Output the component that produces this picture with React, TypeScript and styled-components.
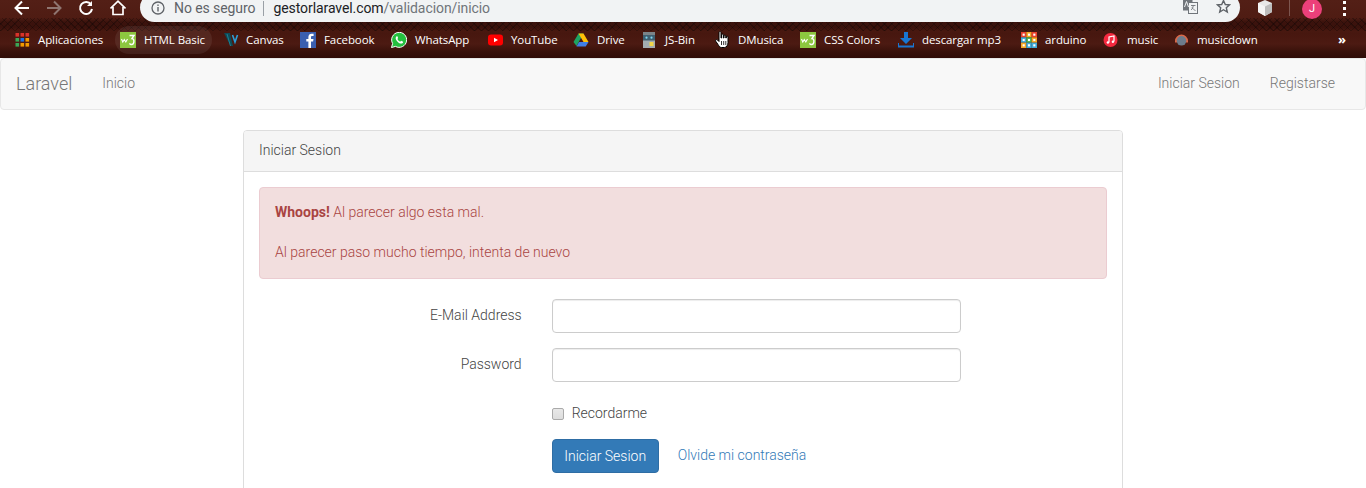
import React from "react";
import styled, { createGlobalStyle } from "styled-components";

const Global = createGlobalStyle`
  html, body { margin: 0; padding: 0; height: 488px; overflow: hidden; background: #fff; }
  body { font-family: Roboto, "Liberation Sans", sans-serif; font-size: 14px; font-weight: 300; line-height: 20px; color: #555; }
  * { box-sizing: border-box; }
`;

const Chrome = styled.div`
  height: 58px;
  position: relative;
  background-color: #3f120c;
  background-image:
    repeating-linear-gradient(45deg, rgba(0,0,0,.26) 0 1px, transparent 1px 5px),
    repeating-linear-gradient(-45deg, rgba(0,0,0,.26) 0 1px, transparent 1px 5px),
    linear-gradient(180deg, transparent 0, rgba(20,0,0,.3) 30%, rgba(20,0,0,.3) 70%, transparent 100%),
    linear-gradient(180deg, #531f16 0, #4f1c13 18px, #47170f 34px, #4c1a12 44px, #3a120b 51px, #2f0c07 58px);
  background-size: 100% 13px, 100% 13px, 100% 13px, 100% 100%;
  background-position: 0 18px, 0 18px, 0 18px, 0 0;
  background-repeat: no-repeat;
`;

const TopBar = styled.div`
  height: 22px;
  display: flex;
  align-items: flex-end;
  overflow: hidden;
  padding-left: 15px;
`;

const NavIcon = styled.svg<{ $mr: number; $ml?: number; $sw?: number }>`
  width: 16px;
  height: 16px;
  flex: none;
  margin-left: ${(p) => p.$ml ?? 0}px;
  margin-right: ${(p) => p.$mr}px;
  align-self: flex-start;
  fill: none;
  stroke: ${(p) => p.color || "#fff"};
  stroke-width: ${(p) => p.$sw ?? 2};
`;

const Omnibox = styled.div`
  width: 1100px;
  height: 29px;
  flex: none;
  background: #f1f3f4;
  border-radius: 15px;
  display: flex;
  align-items: flex-start;
  padding: 7px 9px 0 11px;
  font-family: Roboto, sans-serif;
  font-weight: 400;
  font-size: 14px;
  line-height: 17px;
  letter-spacing: -0.08px;
`;

const InfoIcon = styled.svg`
  width: 14px;
  height: 14px;
  margin: 1px 9px 0 0;
  flex: none;
`;

const Insecure = styled.span`
  color: #5f6368;
`;

const Separator = styled.span`
  width: 1px;
  height: 15px;
  background: #9aa0a6;
  margin: 1px 9px 0 8px;
`;

const Domain = styled.span`
  color: #202124;
`;

const UrlPath = styled.span`
  color: #70757a;
`;

const OmniActions = styled.div`
  margin-left: auto;
  display: flex;
  gap: 18px;
  margin-top: -1px;
`;

const OmniIcon = styled.svg`
  width: 15px;
  height: 15px;
  flex: none;
`;

const CubeIcon = styled.svg`
  width: 16px;
  height: 16px;
  flex: none;
`;

const ToolIcons = styled.div`
  display: flex;
  align-items: center;
  align-self: flex-start;
  height: 16px;
  margin-left: 17px;
  flex: none;
`;

const ToolDivider = styled.span`
  width: 1px;
  height: 16px;
  background: rgba(255, 255, 255, 0.25);
  margin: 0 12px 0 16px;
`;

const Avatar = styled.span`
  width: 20px;
  height: 20px;
  border-radius: 50%;
  background: #ec407a;
  color: #fff;
  font: 400 11px/20px Roboto, sans-serif;
  text-align: center;
  margin-top: 1px;
`;

const MenuDots = styled.span`
  display: flex;
  flex-direction: column;
  gap: 3px;
  margin-left: 21px;
  & > i {
    width: 3px;
    height: 3px;
    background: #fff;
    display: block;
  }
`;

const BookmarkBar = styled.div`
  height: 36px;
  display: flex;
  align-items: center;
  padding-left: 15px;
  position: relative;
`;

const Bookmark = styled.div<{ $w: number; $gap?: number; $active?: boolean }>`
  width: ${(p) => p.$w}px;
  flex: none;
  display: flex;
  align-items: center;
  gap: ${(p) => p.$gap ?? 8}px;
  height: 28px;
  position: relative;
  color: #fff;
  font-family: "Open Sans", sans-serif;
  font-weight: 400;
  font-size: 11.5px;
  letter-spacing: -0.1px;
  white-space: nowrap;
  &::before {
    content: "";
    display: ${(p) => (p.$active ? "block" : "none")};
    position: absolute;
    left: -5px;
    top: 0;
    width: 97px;
    height: 28px;
    border-radius: 14px;
    background: rgba(255, 255, 255, 0.07);
  }
`;

const BookmarkIcon = styled.svg`
  width: 16px;
  height: 16px;
  flex: none;
  position: relative;
`;

const BookmarkLabel = styled.span`
  position: relative;
`;

const Chevrons = styled.span`
  position: absolute;
  left: 1338px;
  top: 7px;
  color: #fff;
  font: 700 13px/20px "Open Sans", sans-serif;
`;

const HandCursor = styled.svg`
  position: absolute;
  left: 715px;
  top: 9px;
  width: 14px;
  height: 17px;
`;

const Navbar = styled.nav`
  height: 52px;
  margin-bottom: 20px;
  background: #f8f8f8;
  border: 1px solid #e7e7e7;
  border-radius: 4px;
  display: flex;
  align-items: flex-start;
  color: #777;
`;

const Brand = styled.a`
  font-size: 18px;
  line-height: 20px;
  padding: 15px 15px;
  color: #777;
`;

const NavLink = styled.a`
  padding: 14px 15px;
  line-height: 20px;
  color: #777;
`;

const NavRight = styled.div`
  margin-left: auto;
  display: flex;
  padding-right: 15px;
`;

const Panel = styled.section`
  width: 880px;
  margin: 0 auto;
  border: 1px solid #ddd;
  border-radius: 4px 4px 0 0;
  background: #fff;
`;

const PanelHeading = styled.header`
  height: 41px;
  padding: 9px 15px;
  background: #f5f5f5;
  border-bottom: 1px solid #ddd;
  border-radius: 3px 3px 0 0;
  color: #444;
`;

const PanelBody = styled.div`
  padding: 15px;
`;

const Alert = styled.div`
  padding: 14px 15px 16px;
  margin-bottom: 20px;
  background: #f2dede;
  border: 1px solid #ebccd1;
  border-radius: 4px;
  color: #a94442;
  & strong { font-weight: 700; }
`;

const FormGroup = styled.div<{ $mb?: number }>`
  display: grid;
  grid-template-columns: 292.67px 439px;
  margin: 0 -15px ${(p) => p.$mb ?? 15}px;
`;

const FieldLabel = styled.label`
  padding: 6px 15px 0 15px;
  text-align: right;
  font-weight: 300;
  color: #444;
`;

const FieldCell = styled.div`
  padding: 0 15px;
  grid-column: 2;
`;

const Input = styled.input`
  display: block;
  width: 100%;
  height: 34px;
  border: 1px solid #ccc;
  border-radius: 4px;
  background: #fff;
  box-shadow: inset 0 1px 1px rgba(0, 0, 0, 0.075);
  outline: none;
`;

const CheckRow = styled.label`
  display: flex;
  align-items: center;
  gap: 8px;
  height: 20px;
  margin-top: 6px;
  font-weight: 300;
  color: #444;
`;

const CheckBox = styled.span`
  width: 12px;
  height: 12px;
  margin: 2px 0 0;
  border: 1px solid #aaa;
  border-radius: 2px;
  background: linear-gradient(#e8e8e8, #ddd);
`;

const Actions = styled.div`
  display: flex;
  align-items: center;
`;

const SubmitButton = styled.button`
  width: 107px;
  height: 34px;
  padding: 0 0 1px;
  background: #337ab7;
  border: 1px solid #2e6da4;
  border-radius: 4px;
  color: #fff;
  font: 300 14px/20px Roboto, sans-serif;
`;

const ForgotLink = styled.a`
  margin: -2px 0 0 19px;
  color: #337ab7;
`;

const Icon = ({ children, vb = "0 0 16 16" }: { children: React.ReactNode; vb?: string }) => (
  <BookmarkIcon viewBox={vb} preserveAspectRatio="xMinYMid meet">
    {children}
  </BookmarkIcon>
);

const W3 = () => (
  <Icon>
    <rect width="16" height="16" fill="#8cc63f" />
    <path d="M1.500 7l1.300 3 1.500-2.500 1.500 2.500L7.500 7" fill="none" stroke="#fff" strokeWidth="1.100" />
    <path d="M9.500 3.500h4.500l-2 3c2.600 0 2.600 6-.4 6-1 0-1.700-.5-2.100-1.200" fill="none" stroke="#fff" strokeWidth="1.400" />
  </Icon>
);

const apps = ["#d9322a", "#d9322a", "#d9322a", "#3aa757", "#1a73e8", "#f29900", "#3aa757", "#f29900", "#f29900"];

const bookmarks: { label: string; w: number; active?: boolean; icon: React.ReactNode; gap?: number }[] = [
  {
    label: "Aplicaciones",
    w: 105,
    gap: 7,
    icon: (
      <Icon>
        {apps.map((c, i) => (
          <rect key={i} x={(i % 3) * 5 + 0.5} y={Math.floor(i / 3) * 5 + 1} width="3.6" height="3.6" fill={c} />
        ))}
      </Icon>
    ),
  },
  { label: "HTML Basic", w: 104, active: true, icon: <W3 /> },
  {
    label: "Canvas",
    w: 76,
    gap: 6,
    icon: (
      <Icon>
        <path d="M0 1h6l3 13H6.500z" fill="#0e4a56" />
        <path d="M3 2l3.500 12" stroke="#1d7f92" strokeWidth="1" fill="none" />
        <path d="M8.500 3l2.500 7 2.500-7" fill="none" stroke="#2d9fd8" strokeWidth="1.600" />
      </Icon>
    ),
  },
  {
    label: "Facebook",
    w: 91,
    icon: (
      <Icon>
        <rect width="16" height="16" fill="#3b5fb0" />
        <path d="M11 16V9.500h2.100l.4-2.600H11V5.400c0-.8.3-1.300 1.300-1.300h1.300V1.800c-.4 0-1.100-.1-1.900-.1-2 0-3.300 1.200-3.300 3.400v1.800H6.300v2.600h2.100V16z" fill="#fff" />
      </Icon>
    ),
  },
  {
    label: "WhatsApp",
    w: 97,
    icon: (
      <Icon>
        <path d="M.5 15.500l1.100-4A7.500 7.500 0 1 1 4.500 14.400z" fill="#25c03f" stroke="#fff" strokeWidth="1" />
        <path d="M5.600 4.300c-1.300 1-1.300 2.700.3 4.700 1.500 1.900 3.500 3 5 2.500.9-.3 1.300-1.100 1.200-1.700l-2-1-.9 1C8 9.400 6.900 8.300 6.400 7.100l.7-1-.7-1.900z" fill="#fff" />
      </Icon>
    ),
  },
  {
    label: "YouTube",
    w: 85,
    gap: 7,
    icon: (
      <Icon>
        <rect x="0" y="2.500" width="15" height="11" rx="3" fill="#f00" />
        <path d="M6 5.700l4 2.300-4 2.300z" fill="#fff" />
      </Icon>
    ),
  },
  {
    label: "Drive",
    w: 70,
    icon: (
      <Icon>
        <path d="M5.500 1.500h5L6 9.500 3.500 14 0.500 10z" fill="#1ea362" />
        <path d="M5.500 1.500h5l5 8.500h-5z" fill="#ffc107" />
        <path d="M3.500 14.500L6 10h9.500l-2.800 4.500z" fill="#3f7ee8" />
      </Icon>
    ),
  },
  {
    label: "JS-Bin",
    w: 73,
    gap: 6,
    icon: (
      <Icon vb="0 0 16 16">
        <rect width="12" height="16" fill="#a3abb0" />
        <rect width="12" height="3" fill="#7a8388" />
        <rect y="3" width="12" height="5.500" fill="#3f5f70" />
        <circle cx="3.500" cy="5.700" r="1.100" fill="#7fd4ef" />
        <circle cx="8.500" cy="5.700" r="1.100" fill="#7fd4ef" />
        <rect x="6.500" y="10" width="4" height="4" fill="#f2d64b" />
      </Icon>
    ),
  },
  { label: "DMusica", w: 84, gap: 6, icon: <Icon><rect width="0" height="0" /></Icon> },
  { label: "CSS Colors", w: 98, icon: <W3 /> },
  {
    label: "descargar mp3",
    w: 123,
    icon: (
      <Icon>
        <path d="M6 0h4v6h4l-6 6-6-6h4z" fill="#1976d2" />
        <path d="M0 11v3.500h16V11" fill="none" stroke="#1976d2" strokeWidth="2" />
      </Icon>
    ),
  },
  {
    label: "arduino",
    w: 82,
    icon: (
      <Icon vb="0 0 15 15">
        {["#e8402b", "#f5a623", "#e8402b", "#3fa9d8", "#4caf50", "#f5a623", "#f5a623", "#3fa9d8", "#3fa9d8"].map((c, i) => (
          <g key={i}>
            <rect x={(i % 3) * 5} y={Math.floor(i / 3) * 5} width="5" height="5" fill={c} />
            <rect x={(i % 3) * 5 + 1.5} y={Math.floor(i / 3) * 5 + 1.5} width="2" height="2" fill="#fff" />
          </g>
        ))}
      </Icon>
    ),
  },
  {
    label: "music",
    w: 71,
    icon: (
      <Icon>
        <circle cx="7.500" cy="8" r="7" fill="#f5293f" />
        <path d="M6 10.500V5l5-1v5.500" fill="none" stroke="#fff" strokeWidth="1.200" />
        <circle cx="4.900" cy="10.500" r="1.200" fill="#fff" />
        <circle cx="9.900" cy="9.700" r="1.200" fill="#fff" />
      </Icon>
    ),
  },
  {
    label: "musicdown",
    w: 100,
    gap: 7,
    icon: (
      <Icon>
        <path d="M1 9a6.500 6.500 0 0 1 13 0v1.500H12V9M3 9v1.500H1V9" fill="#d9694a" />
        <circle cx="7.500" cy="8.800" r="4.800" fill="#6d7c8c" />
      </Icon>
    ),
  },
];

export default function App() {
  return (
    <>
      <Global />
      <Chrome>
        <TopBar>
          <NavIcon $mr={16} $ml={-1} viewBox="0 0 16 16">
            <path d="M15 8H2M8 1.500L1.500 8 8 14.500" />
          </NavIcon>
          <NavIcon $mr={16} viewBox="0 0 16 16" color="#8f7570">
            <path d="M1 8h13M8 1.500L14.500 8 8 14.500" />
          </NavIcon>
          <NavIcon $mr={16} viewBox="0 0 16 16">
            <path d="M13 4.500A6 6 0 1 0 14 9" />
            <path d="M14 1v5H9" fill="#fff" stroke="none" />
          </NavIcon>
          <NavIcon $mr={14} $sw={1.7} viewBox="0 0 16 16">
            <path d="M.500 8.500L8 1.200l7.500 7.300M3 7v7.500h10V7" strokeLinejoin="miter" />
          </NavIcon>
          <Omnibox>
            <InfoIcon viewBox="0 0 14 14">
              <circle cx="7" cy="7" r="6" fill="none" stroke="#5f6368" strokeWidth="1.300" />
              <rect x="6.300" y="6" width="1.400" height="4.500" fill="#5f6368" />
              <rect x="6.300" y="3.500" width="1.400" height="1.400" fill="#5f6368" />
            </InfoIcon>
            <Insecure>No es seguro</Insecure>
            <Separator />
            <Domain>gestorlaravel.com</Domain>
            <UrlPath>/validacion/inicio</UrlPath>
            <OmniActions>
              <OmniIcon viewBox="0 0 15 15">
                <rect x="0" y="0.500" width="9.500" height="11" fill="#70757a" />
                <rect x="5.500" y="3.500" width="9" height="11" fill="#f1f3f4" stroke="#70757a" />
                <path d="M8 6.500h4.500M10.200 6.500c0 2-1 3.500-2.200 4.500M9 8.500c.8 1.300 2 2.500 3.500 3" fill="none" stroke="#70757a" strokeWidth=".9" />
                <path d="M1.500 8l2-5.500L5.500 8" fill="none" stroke="#f1f3f4" strokeWidth="1" />
              </OmniIcon>
              <OmniIcon viewBox="0 0 15 15">
                <path d="M7.500 1.500l1.800 4 4.200.4-3.200 2.800 1 4.300-3.800-2.300-3.800 2.300 1-4.300L1.500 5.900l4.200-.4z" fill="none" stroke="#5f6368" strokeWidth="1.400" />
              </OmniIcon>
            </OmniActions>
          </Omnibox>
          <ToolIcons>
            <CubeIcon viewBox="0 0 16 16">
              <path d="M8 0l7 3v9l-7 4-7-4V3z" fill="#e8e8e8" />
              <path d="M8 6.500L15 3v9l-7 4z" fill="#bdbdbd" />
              <path d="M8 6.500V16L1 12V3z" fill="#f5f5f5" />
            </CubeIcon>
            <ToolDivider />
            <Avatar>J</Avatar>
            <MenuDots>
              <i />
              <i />
              <i />
            </MenuDots>
          </ToolIcons>
        </TopBar>
        <BookmarkBar>
          {bookmarks.map((b) => (
            <Bookmark key={b.label} $w={b.w} $gap={b.gap} $active={b.active}>
              {b.icon}
              <BookmarkLabel>{b.label}</BookmarkLabel>
            </Bookmark>
          ))}
          <Chevrons>»</Chevrons>
          <HandCursor viewBox="0 0 14 17">
            <path
              d="M4 1.500c0-1.300 2-1.300 2 0V7h.6V4c0-1.300 1.800-1.300 1.800 0v3H9V5c0-1.200 1.800-1.200 1.800 0v2h.5V6c0-1.100 1.700-1.100 1.700 0v5.500c0 2.500-1.500 5-3.500 5H6.500C4.800 16.500 4 15 3 13.500L.8 10.300c-.8-1.200.6-2.300 1.700-1.300L4 10.500z"
              fill="#fff"
              stroke="#000"
              strokeWidth="1"
            />
            <path d="M6.500 10v4M8.700 10v4M10.800 10v4" stroke="#000" strokeWidth=".8" />
          </HandCursor>
        </BookmarkBar>
      </Chrome>
      <Navbar>
        <Brand>Laravel</Brand>
        <NavLink>Inicio</NavLink>
        <NavRight>
          <NavLink>Iniciar Sesion</NavLink>
          <NavLink>Registarse</NavLink>
        </NavRight>
      </Navbar>
      <Panel>
        <PanelHeading>Iniciar Sesion</PanelHeading>
        <PanelBody>
          <Alert>
            <strong>Whoops!</strong> Al parecer algo esta mal.
            <br />
            <br />
            Al parecer paso mucho tiempo, intenta de nuevo
          </Alert>
          <FormGroup>
            <FieldLabel>E-Mail Address</FieldLabel>
            <FieldCell>
              <Input type="email" />
            </FieldCell>
          </FormGroup>
          <FormGroup>
            <FieldLabel>Password</FieldLabel>
            <FieldCell>
              <Input type="password" />
            </FieldCell>
          </FormGroup>
          <FormGroup $mb={16}>
            <FieldCell>
              <CheckRow>
                <CheckBox />
                Recordarme
              </CheckRow>
            </FieldCell>
          </FormGroup>
          <FormGroup>
            <FieldCell>
              <Actions>
                <SubmitButton>Iniciar Sesion</SubmitButton>
                <ForgotLink>Olvide mi contraseña</ForgotLink>
              </Actions>
            </FieldCell>
          </FormGroup>
        </PanelBody>
      </Panel>
    </>
  );
}
